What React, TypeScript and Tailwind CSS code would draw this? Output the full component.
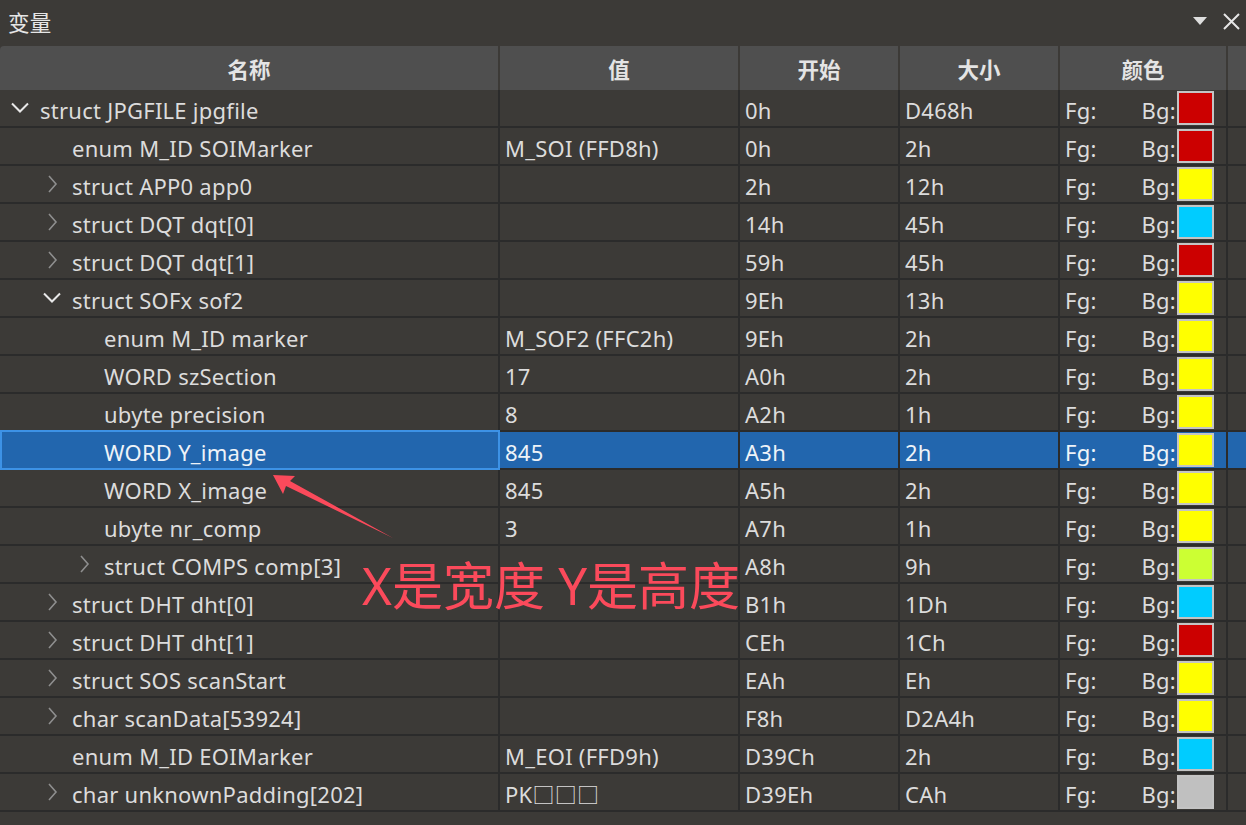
import React from "react";

type Row = {
  name: string;
  level: number;
  toggle?: "open" | "closed";
  value?: string;
  start: string;
  size: string;
  bg: string;
  selected?: boolean;
};

const rows: Row[] = [
  { name: "struct JPGFILE jpgfile", level: 0, toggle: "open", start: "0h", size: "D468h", bg: "#cc0000" },
  { name: "enum M_ID SOIMarker", level: 1, value: "M_SOI (FFD8h)", start: "0h", size: "2h", bg: "#cc0000" },
  { name: "struct APP0 app0", level: 1, toggle: "closed", start: "2h", size: "12h", bg: "#ffff00" },
  { name: "struct DQT dqt[0]", level: 1, toggle: "closed", start: "14h", size: "45h", bg: "#00ccff" },
  { name: "struct DQT dqt[1]", level: 1, toggle: "closed", start: "59h", size: "45h", bg: "#cc0000" },
  { name: "struct SOFx sof2", level: 1, toggle: "open", start: "9Eh", size: "13h", bg: "#ffff00" },
  { name: "enum M_ID marker", level: 2, value: "M_SOF2 (FFC2h)", start: "9Eh", size: "2h", bg: "#ffff00" },
  { name: "WORD szSection", level: 2, value: "17", start: "A0h", size: "2h", bg: "#ffff00" },
  { name: "ubyte precision", level: 2, value: "8", start: "A2h", size: "1h", bg: "#ffff00" },
  { name: "WORD Y_image", level: 2, value: "845", start: "A3h", size: "2h", bg: "#ffff00", selected: true },
  { name: "WORD X_image", level: 2, value: "845", start: "A5h", size: "2h", bg: "#ffff00" },
  { name: "ubyte nr_comp", level: 2, value: "3", start: "A7h", size: "1h", bg: "#ffff00" },
  { name: "struct COMPS comp[3]", level: 2, toggle: "closed", start: "A8h", size: "9h", bg: "#ccff33" },
  { name: "struct DHT dht[0]", level: 1, toggle: "closed", start: "B1h", size: "1Dh", bg: "#00ccff" },
  { name: "struct DHT dht[1]", level: 1, toggle: "closed", start: "CEh", size: "1Ch", bg: "#cc0000" },
  { name: "struct SOS scanStart", level: 1, toggle: "closed", start: "EAh", size: "Eh", bg: "#ffff00" },
  { name: "char scanData[53924]", level: 1, toggle: "closed", start: "F8h", size: "D2A4h", bg: "#ffff00" },
  { name: "enum M_ID EOIMarker", level: 1, value: "M_EOI (FFD9h)", start: "D39Ch", size: "2h", bg: "#00ccff" },
  { name: "char unknownPadding[202]", level: 1, toggle: "closed", value: "PK\u25a1\u25a1\u25a1", start: "D39Eh", size: "CAh", bg: "#c0c0c0" },
];

const indents = ["pl-[40px]", "pl-[72px]", "pl-[104px]"];
const chevronPos = ["left-[10px]", "left-[42px]", "left-[74px]"];

const Chevron = ({ open }: { open: boolean }) =>
  open ? (
    <svg width="20" height="12" viewBox="0 0 20 12" fill="none">
      <path d="M2 1.5 L10 9.5 L18 1.5" stroke="#e8e8e8" strokeWidth="2" />
    </svg>
  ) : (
    <svg width="12" height="20" viewBox="0 0 12 20" fill="none">
      <path d="M3 2 L10 10 L3 18" stroke="#8e8e8e" strokeWidth="1.6" />
    </svg>
  );

const HeaderCell = ({ w, children }: { w: string; children?: React.ReactNode }) => (
  <div className={`${w} h-full bg-[#4f4f4f] flex items-center justify-center pt-[4px] font-bold text-[#e4e4e4] mr-[2px]`}>
    {children}
  </div>
);

export default function App() {
  return (
    <div
      className="relative w-[1246px] h-[825px] bg-[#3c3a37] text-[#dcdcdc] overflow-hidden text-[22px] tracking-[0.25px]"
      style={{ fontFamily: '"Noto Sans", "Noto Sans CJK SC", sans-serif' }}
    >
      {/* title bar */}
      <div className="h-[46px] flex items-center pl-[8px] pr-[6px] text-[21.5px] text-[#e6e6e6]">
        <span className="pt-[1px]">变量</span>
        <div className="ml-auto flex items-center gap-[16px] -mt-[4px]">
          <svg width="14" height="9" viewBox="0 0 14 9">
            <path d="M0 0 H14 L7 8 Z" fill="#dedede" />
          </svg>
          <svg width="17" height="17" viewBox="0 0 17 17">
            <path d="M1 1 L16 16 M16 1 L1 16" stroke="#e6e6e6" strokeWidth="2" />
          </svg>
        </div>
      </div>

      {/* header */}
      <div className="flex h-[44px] text-[21.5px] tracking-normal">
        <HeaderCell w="w-[498px] rounded-tl-[4px]">名称</HeaderCell>
        <HeaderCell w="w-[238px]">值</HeaderCell>
        <HeaderCell w="w-[158px]">开始</HeaderCell>
        <HeaderCell w="w-[158px]">大小</HeaderCell>
        <HeaderCell w="w-[166px]">颜色</HeaderCell>
        <div className="flex-1 h-full bg-[#4f4f4f]" />
      </div>

      {/* rows */}
      <div className="flex flex-col">
        {rows.map((r, i) => (
          <div
            key={i}
            className={`flex h-[38px] border-b-2 border-[#2b2b2b] ${r.selected ? "bg-[#2266ae] text-[#eef3f8]" : ""}`}
          >
            <div
              className={`relative w-[500px] flex items-center border-r-2 ${indents[r.level]} ${
                r.selected ? "border-2 border-[#3d92e6] -mt-[2px] h-[40px]" : "border-[#2b2b2b]"
              }`}
            >
              {r.toggle && (
                <span className={`absolute ${chevronPos[r.level]} top-0 bottom-0 flex items-center w-[20px] justify-center`}>
                  <Chevron open={r.toggle === "open"} />
                </span>
              )}
              <span className={`pt-[5px] ${r.selected ? "-ml-[2px]" : ""}`}>{r.name}</span>
            </div>
            <div className="w-[240px] flex items-center pl-[5px] pt-[5px] border-r-2 border-[#2b2b2b]">{r.value}</div>
            <div className="w-[160px] flex items-center pl-[5px] pt-[5px] border-r-2 border-[#2b2b2b]">{r.start}</div>
            <div className="w-[160px] flex items-center pl-[5px] pt-[5px] border-r-2 border-[#2b2b2b]">{r.size}</div>
            <div className="w-[168px] flex items-center pl-[5px] border-r-2 border-[#2b2b2b]">
              <span className="pt-[5px]">Fg:</span>
              <span className="ml-auto mr-[1px] pt-[5px]">Bg:</span>
              <span
                className="w-[37px] h-[34px] border-2 border-[#c4c4c4] mr-[12px]"
                style={{ backgroundColor: r.bg }}
              />
            </div>
            <div className="flex-1" />
          </div>
        ))}
      </div>

      {/* annotation */}
      <svg className="absolute left-0 top-0 pointer-events-none" width="1246" height="825">
        <polygon
          points="273,475 295,476 290,481 393,538 286,486 283,494"
          fill="#fb4a5b"
        />
      </svg>
      <div
        className="absolute left-[362px] top-[560px] text-[51px] leading-none tracking-normal text-[#fb4a5b] whitespace-nowrap"
        style={{ fontFamily: '"Noto Sans", "Noto Sans CJK SC", sans-serif' }}
      >
        X是宽度 Y是高度
      </div>
    </div>
  );
}
